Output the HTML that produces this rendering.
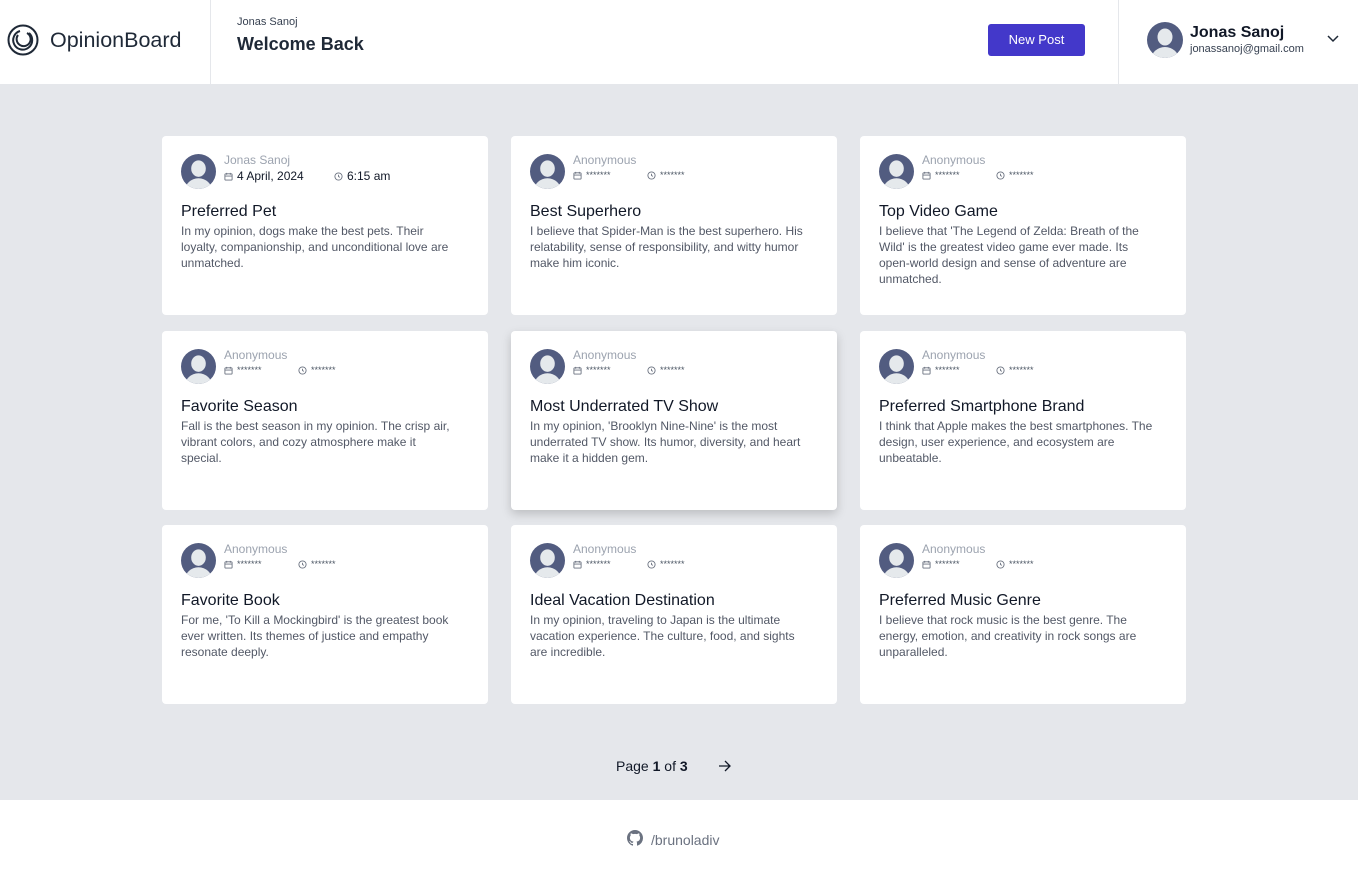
<!DOCTYPE html><html><head><style>
*{margin:0;padding:0;box-sizing:border-box}
body{width:1358px;height:879px;font-family:"Liberation Sans",sans-serif;background:#fff;overflow:hidden;position:relative}
.hdr{position:absolute;top:0;left:0;width:1358px;height:85px;background:#fff;border-bottom:1px solid #e5e7eb}
.vl{position:absolute;top:0;width:1px;height:85px;background:#e5e7eb}
.main{position:absolute;top:85px;left:0;width:1358px;height:715px;background:#e5e7eb}
.card{position:absolute;width:326px;height:179px;background:#fff;border-radius:4px}
.av{position:absolute;left:19px;top:18px;width:35px;height:35px}
.nm{position:absolute;left:62px;top:17px;font-size:12px;color:#9ca3af}
.meta{position:absolute;top:34px;font-size:9px;color:#4b5563;display:flex;align-items:center;gap:4px}
.t{position:absolute;left:19px;top:67px;font-size:16px;color:#111827}
.b{position:absolute;left:19px;top:87px;width:288px;font-size:12px;line-height:16px;color:#525866}
</style></head><body>
<div class="hdr">
<svg style="position:absolute;left:7px;top:24px" width="32" height="32" viewBox="0 0 32 32" fill="none" stroke="#1f2937" stroke-width="2"><circle cx="16" cy="16" r="14.5"/><path d="M22 9a9.5 9.5 0 1 1-9-2"/><path d="M11 11a7 7 0 1 0 9-2"/></svg>
<div style="position:absolute;left:50px;top:28px;font-size:21.5px;color:#1f2937">OpinionBoard</div>
<div class="vl" style="left:210px"></div>
<div style="position:absolute;left:237px;top:16px;font-size:11px;color:#374151">Jonas Sanoj</div>
<div style="position:absolute;left:237px;top:34px;font-size:18px;font-weight:bold;color:#1f2937">Welcome Back</div>
<div style="position:absolute;left:988px;top:24px;width:97px;height:32px;background:#4338ca;border-radius:3px;color:#fff;font-size:13px;text-align:center;line-height:32px">New Post</div>
<div class="vl" style="left:1118px"></div>
<svg style="position:absolute;left:1147px;top:22px" width="36" height="36" viewBox="0 0 36 36"><clipPath id="c0"><circle cx="18" cy="18" r="18"/></clipPath><g clip-path="url(#c0)"><rect width="36" height="36" fill="#525c80"/><ellipse cx="18" cy="15" rx="7.5" ry="8.5" fill="#e5e9ec"/><ellipse cx="18" cy="38" rx="14" ry="13" fill="#e5e9ec"/></g></svg>
<div style="position:absolute;left:1190px;top:24px;font-size:16px;font-weight:bold;color:#111827">Jonas Sanoj</div>
<div style="position:absolute;left:1190px;top:43px;font-size:11px;color:#374151">jonassanoj@gmail.com</div>
<svg style="position:absolute;left:1326px;top:34px" width="14" height="10" viewBox="0 0 14 10" fill="none" stroke="#1f2937" stroke-width="1.5"><path d="M2 2l5 5 5-5"/></svg>
</div>
<div class="main"></div>
<div id="cards"></div>
<div style="position:absolute;top:758px;left:616px;font-size:14px;color:#111827">Page <b>1</b> of <b>3</b></div>
<svg style="position:absolute;left:718px;top:759px" width="14" height="14" viewBox="0 0 14 14" fill="none" stroke="#111827" stroke-width="1.3"><path d="M1 7h11M7 2l5 5-5 5"/></svg>
<svg style="position:absolute;left:627px;top:830px" width="16" height="16" viewBox="0 0 16 16"><path fill="#6b7280" d="M8 0C3.58 0 0 3.58 0 8c0 3.54 2.29 6.53 5.47 7.59.4.07.55-.17.55-.38v-1.33c-2.23.48-2.7-1.07-2.7-1.07-.36-.92-.89-1.170-.89-1.17-.73-.5.05-.49.05-.49.8.06 1.23.83 1.23.83.71 1.22 1.870.87 2.330.66.07-.52.28-.87.5-1.07-1.78-.2-3.64-.89-3.64-3.950 0-.87.31-1.59.82-2.15-.08-.2-.36-1.02.08-2.12 0 0 .67-.21 2.2.82a7.6 7.6 0 0 1 4 0c1.53-1.04 2.2-.82 2.2-.82.44 1.1.16 1.92.08 2.12.51.56.82 1.27.82 2.15 0 3.07-1.87 3.75-3.65 3.95.29.25.54.73.54 1.48v2.2c0 .21.15.46.55.38A8.01 8.01 0 0 0 16 8c0-4.42-3.58-8-8-8z"/></svg>
<div style="position:absolute;left:651px;top:832px;font-size:14px;color:#6b7280">/brunoladiv</div>
<script>
const d=[["Jonas Sanoj","Preferred Pet","In my opinion, dogs make the best pets. Their loyalty, companionship, and unconditional love are unmatched."],
["Anonymous","Best Superhero","I believe that Spider-Man is the best superhero. His relatability, sense of responsibility, and witty humor make him iconic."],
["Anonymous","Top Video Game","I believe that 'The Legend of Zelda: Breath of the Wild' is the greatest video game ever made. Its open-world design and sense of adventure are unmatched."],
["Anonymous","Favorite Season","Fall is the best season in my opinion. The crisp air, vibrant colors, and cozy atmosphere make it special."],
["Anonymous","Most Underrated TV Show","In my opinion, 'Brooklyn Nine-Nine' is the most underrated TV show. Its humor, diversity, and heart make it a hidden gem."],
["Anonymous","Preferred Smartphone Brand","I think that Apple makes the best smartphones. The design, user experience, and ecosystem are unbeatable."],
["Anonymous","Favorite Book","For me, 'To Kill a Mockingbird' is the greatest book ever written. Its themes of justice and empathy resonate deeply."],
["Anonymous","Ideal Vacation Destination","In my opinion, traveling to Japan is the ultimate vacation experience. The culture, food, and sights are incredible."],
["Anonymous","Preferred Music Genre","I believe that rock music is the best genre. The energy, emotion, and creativity in rock songs are unparalleled."]];
const br=[["In my opinion, dogs make the best pets. Their","loyalty, companionship, and unconditional love are","unmatched."],["I believe that Spider-Man is the best superhero. His","relatability, sense of responsibility, and witty humor","make him iconic."],["I believe that 'The Legend of Zelda: Breath of the","Wild' is the greatest video game ever made. Its","open-world design and sense of adventure are","unmatched."],["Fall is the best season in my opinion. The crisp air,","vibrant colors, and cozy atmosphere make it","special."],["In my opinion, 'Brooklyn Nine-Nine' is the most","underrated TV show. Its humor, diversity, and heart","make it a hidden gem."],["I think that Apple makes the best smartphones. The","design, user experience, and ecosystem are","unbeatable."],["For me, 'To Kill a Mockingbird' is the greatest book","ever written. Its themes of justice and empathy","resonate deeply."],["In my opinion, traveling to Japan is the ultimate","vacation experience. The culture, food, and sights","are incredible."],["I believe that rock music is the best genre. The","energy, emotion, and creativity in rock songs are","unparalleled."]];
const xs=[162,511,860],ys=[136,331,525];let h="";
const cal='<svg width="9" height="9" viewBox="0 0 10 10" fill="none" stroke="#6b7280" stroke-width="1"><rect x="1" y="2" width="8" height="7" rx="1"/><path d="M1 4.5h8M3 1v2M7 1v2"/></svg>';
const clk='<svg width="9" height="9" viewBox="0 0 10 10" fill="none" stroke="#6b7280" stroke-width="1"><circle cx="5" cy="5" r="4"/><path d="M5 3v2l1.5 1"/></svg>';
d.forEach((c,i)=>{const me=i==0;const sh=i==4?"box-shadow:0 4px 10px rgba(0,0,0,.18);":"";
h+=`<div class="card" style="left:${xs[i%3]}px;top:${ys[Math.floor(i/3)]}px;${sh}">
<svg class="av" viewBox="0 0 36 36"><clipPath id="a${i}"><circle cx="18" cy="18" r="18"/></clipPath><g clip-path="url(#a${i})"><rect width="36" height="36" fill="#525c80"/><ellipse cx="18" cy="15" rx="7.5" ry="8.5" fill="#e5e9ec"/><ellipse cx="18" cy="38" rx="14" ry="13" fill="#e5e9ec"/></g></svg>
<div class="nm">${c[0]}</div>
<div class="meta" style="left:62px;${me?'font-size:12px;color:#111827;top:33px':''}">${cal}${me?'4 April, 2024':'*******'}</div>
<div class="meta" style="left:${me?172:136}px;${me?'font-size:12px;color:#111827;top:33px':''}">${clk}${me?'6:15 am':'*******'}</div>
<div class="t">${c[1]}</div><div class="b" style="white-space:nowrap">${br[i].join('<br>')}</div></div>`});
document.getElementById("cards").innerHTML=h;
</script></body></html>
